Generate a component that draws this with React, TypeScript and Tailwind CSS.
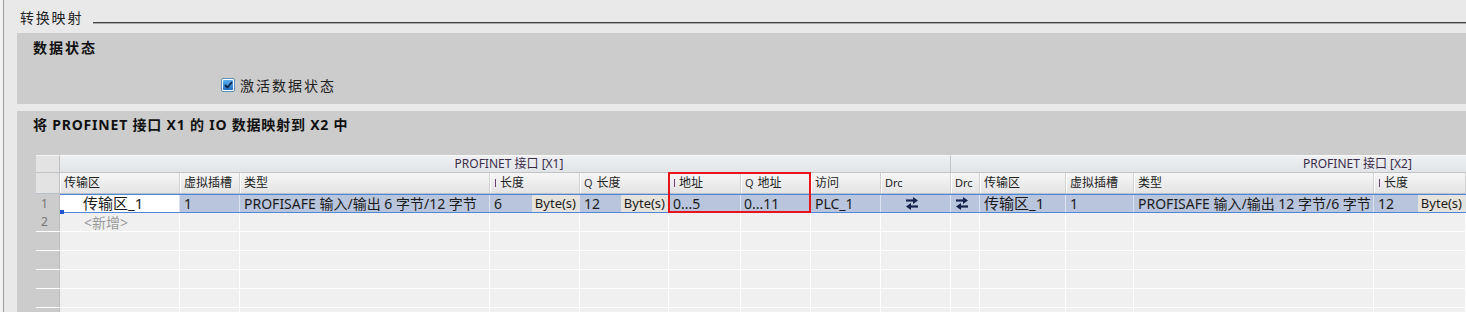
import React from "react";

const FONT = "font-['Noto_Sans','Noto_Sans_CJK_SC',sans-serif]";
const CJK = "font-['Noto_Sans_CJK_SC',sans-serif]";

const widths = [120, 60, 250, 90, 89, 72, 70, 70, 70, 29, 86, 68, 240, 92, 100];

function Arrows() {
  return (
    <svg width="14" height="13" viewBox="0 0 14 13" className="block">
      <line x1="1" y1="3.5" x2="9" y2="3.5" stroke="#17234f" strokeWidth="2.2" />
      <polygon points="8,0 13,3.5 8,7" fill="#17234f" />
      <line x1="5" y1="9.5" x2="13" y2="9.5" stroke="#17234f" strokeWidth="2.2" />
      <polygon points="6,6 1,9.5 6,13" fill="#17234f" />
    </svg>
  );
}

function IQ({ p, t }: { p: "I" | "Q"; t: string }) {
  return (
    <span className="flex items-center gap-[4px]">
      {p === "I" ? (
        <span className="inline-block w-[1px] h-[8px] bg-[#6b3d74] ml-[1px]" />
      ) : (
        <span className="text-[11px] text-[#333]">Q</span>
      )}
      <span>{t}</span>
    </span>
  );
}

const headers: React.ReactNode[] = [
  "传输区",
  "虚拟插槽",
  "类型",
  <IQ p="I" t="长度" />,
  <IQ p="Q" t="长度" />,
  <IQ p="I" t="地址" />,
  <IQ p="Q" t="地址" />,
  "访问",
  <span className="text-[11px]">Drc</span>,
  <span className="text-[11px]">Drc</span>,
  "传输区",
  "虚拟插槽",
  "类型",
  <IQ p="I" t="长度" />,
  "",
];

function ByteCell({ v }: { v: string }) {
  return (
    <div className="flex w-full h-full items-center justify-between">
      <span className="pl-[4px]">{v}</span>
      <span className="h-full flex items-center px-[3px] bg-[#e6e3dc] text-[13px] leading-none">Byte(s)</span>
    </div>
  );
}

const row1: React.ReactNode[] = [
  <span className="pl-[23px] text-[15px] leading-[17px]">传输区_1</span>,
  <span className="pl-[4px]">1</span>,
  <span className="pl-[4px]">PROFISAFE 输入/输出 6 字节/12 字节</span>,
  <ByteCell v="6" />,
  <ByteCell v="12" />,
  <span className="pl-[4px]">0...5</span>,
  <span className="pl-[3px]">0...11</span>,
  <span className="pl-[4px]">PLC_1</span>,
  <span className="flex w-full justify-start pl-[24px]"><Arrows /></span>,
  <span className="flex w-full justify-start pl-[4px]"><Arrows /></span>,
  <span className="pl-[4px] text-[15px] leading-[17px]">传输区_1</span>,
  <span className="pl-[4px]">1</span>,
  <span className="pl-[4px]">PROFISAFE 输入/输出 12 字节/6 字节</span>,
  <ByteCell v="12" />,
  null,
];

export default function App() {
  return (
    <div className={`w-[1466px] h-[312px] overflow-hidden bg-[#e9e9e9] flex text-[#1a1a1a] ${FONT}`}>
      <div className="w-[3px] h-full bg-[#f2f2f2]" />
      <div className="w-[1px] h-full bg-[#9a9a9a]" />
      <div className="flex-1 min-w-0 flex flex-col">
        {/* top title */}
        <div className="h-[33px] flex items-start">
          <span className={`ml-[16px] mt-[8px] text-[14px] leading-[18px] tracking-[1.8px] ${CJK} text-[#222]`}>
            转换映射
          </span>
          <div className="flex-1 mt-[22px] ml-[10px] h-[2px] border-t border-[#444] border-b border-b-[#a8a8a8]" />
        </div>
        {/* panel 1 */}
        <div className="ml-[13px] h-[71px] bg-[#cccccc] flex flex-col">
          <div className={`pl-[16px] pt-[5px] text-[14px] leading-[18px] font-bold tracking-[2px] ${CJK} text-[#111]`}>
            数据状态
          </div>
          <div className="mt-[20px] ml-[204px] flex items-center gap-[5px]">
            <div className="w-[14px] h-[14px] rounded-[2px] border border-[#5a8fc0] bg-white p-[1px]">
              <div className="w-full h-full rounded-[1px] bg-gradient-to-b from-[#5db0ee] to-[#1e6fbf] flex items-center justify-center">
                <svg width="9" height="8" viewBox="0 0 9 8">
                  <path d="M1 4 L3.5 6.5 L8 1" stroke="#0b2447" strokeWidth="1.8" fill="none" />
                </svg>
              </div>
            </div>
            <span className={`text-[14px] leading-[18px] tracking-[2px] ${CJK} text-[#222]`}>
              激活数据状态
            </span>
          </div>
        </div>
        <div className="h-[7px]" />
        {/* panel 2 */}
        <div className="ml-[13px] flex-1 bg-[#cccccc] flex flex-col overflow-hidden">
          <div className="pl-[16px] pt-[5px] text-[14px] leading-[18px] font-bold tracking-[0.8px] text-[#111]">
            将 PROFINET 接口 X1 的 IO 数据映射到 X2 中
          </div>
          <div className="mt-[21px] ml-[19px] flex flex-col text-[12px] w-[1600px]">
            {/* group header */}
            <div className="flex h-[18px] border-b border-[#c4c4c4]">
              <div className="w-[24px] bg-[#e3e3e3] border-r border-[#c0c0c0] border-t border-t-[#f4f4f4]" />
              <div className="w-[891px] bg-gradient-to-b from-[#eef0f2] to-[#e2e5e8] border-r border-[#c4c4c4] border-t border-t-[#f8f8f8] flex items-center justify-center text-[#3a2c48]">
                <span className="pl-[8px]">PROFINET 接口 [X1]</span>
              </div>
              <div className="flex-1 bg-gradient-to-b from-[#eef0f2] to-[#e2e5e8] border-t border-t-[#f8f8f8] flex items-center">
                <span className="ml-[352px] text-[#3a2c48]">PROFINET 接口 [X2]</span>
              </div>
            </div>
            {/* header */}
            <div className="flex h-[21px] border-b border-[#b8c0cc]">
              <div className="w-[24px] bg-[#e3e3e3] border-r border-[#c0c0c0]" />
              {headers.map((h, i) => (
                <div
                  key={i}
                  style={{ width: widths[i] }}
                  className="bg-gradient-to-b from-[#f6f6f6] to-[#e4e4e4] border-r border-[#d2d2d2] border-l border-l-white flex items-center pl-[3px] text-[#222] whitespace-nowrap"
                >
                  {h}
                </div>
              ))}
            </div>
            {/* row 1 selected */}
            <div className="flex h-[19px] relative">
              <div className="w-[24px] bg-[#cccccc] border-r border-[#bcbcbc] flex items-center pl-[5px] text-[#777]">1</div>
              <div className="flex flex-1 border-t border-b border-[#4f86d8] text-[14px]">
                {row1.map((c, i) => (
                  <div
                    key={i}
                    style={{ width: widths[i] }}
                    className={`${i === 0 ? "bg-white" : "bg-[#b9c5dc]"} border-r border-[#dde3ee] flex items-center whitespace-nowrap leading-[17px]`}
                  >
                    {c}
                  </div>
                ))}
              </div>
              <div className="absolute left-[24px] bottom-[-1px] w-[4px] h-[4px] bg-[#1f55d0]" />
            </div>
            {/* row 2 */}
            <div className="flex h-[19px] border-b border-white">
              <div className="w-[24px] bg-[#cccccc] border-r border-[#bcbcbc] flex items-center pl-[5px] text-[#777]">2</div>
              {widths.map((w, i) => (
                <div key={i} style={{ width: w }} className="bg-[#f0f0f0] border-r border-white flex items-center">
                  {i === 0 ? <span className="pl-[24px] text-[14px] leading-[17px] text-[#9a9a9a]">&lt;新增&gt;</span> : null}
                </div>
              ))}
            </div>
            {[0, 1, 2, 3, 4].map((r) => (
              <div key={r} className="flex h-[19px] border-b border-white">
                <div className="w-[24px] bg-[#cccccc] border-r border-[#bcbcbc]" />
                {widths.map((w, i) => (
                  <div key={i} style={{ width: w }} className="bg-[#f0f0f0] border-r border-white" />
                ))}
              </div>
            ))}
          </div>
        </div>
      </div>
      {/* red highlight */}
      <div className="absolute left-[668px] top-[172px] w-[143px] h-[41px] border-2 border-[#e8141b] pointer-events-none" />
    </div>
  );
}
